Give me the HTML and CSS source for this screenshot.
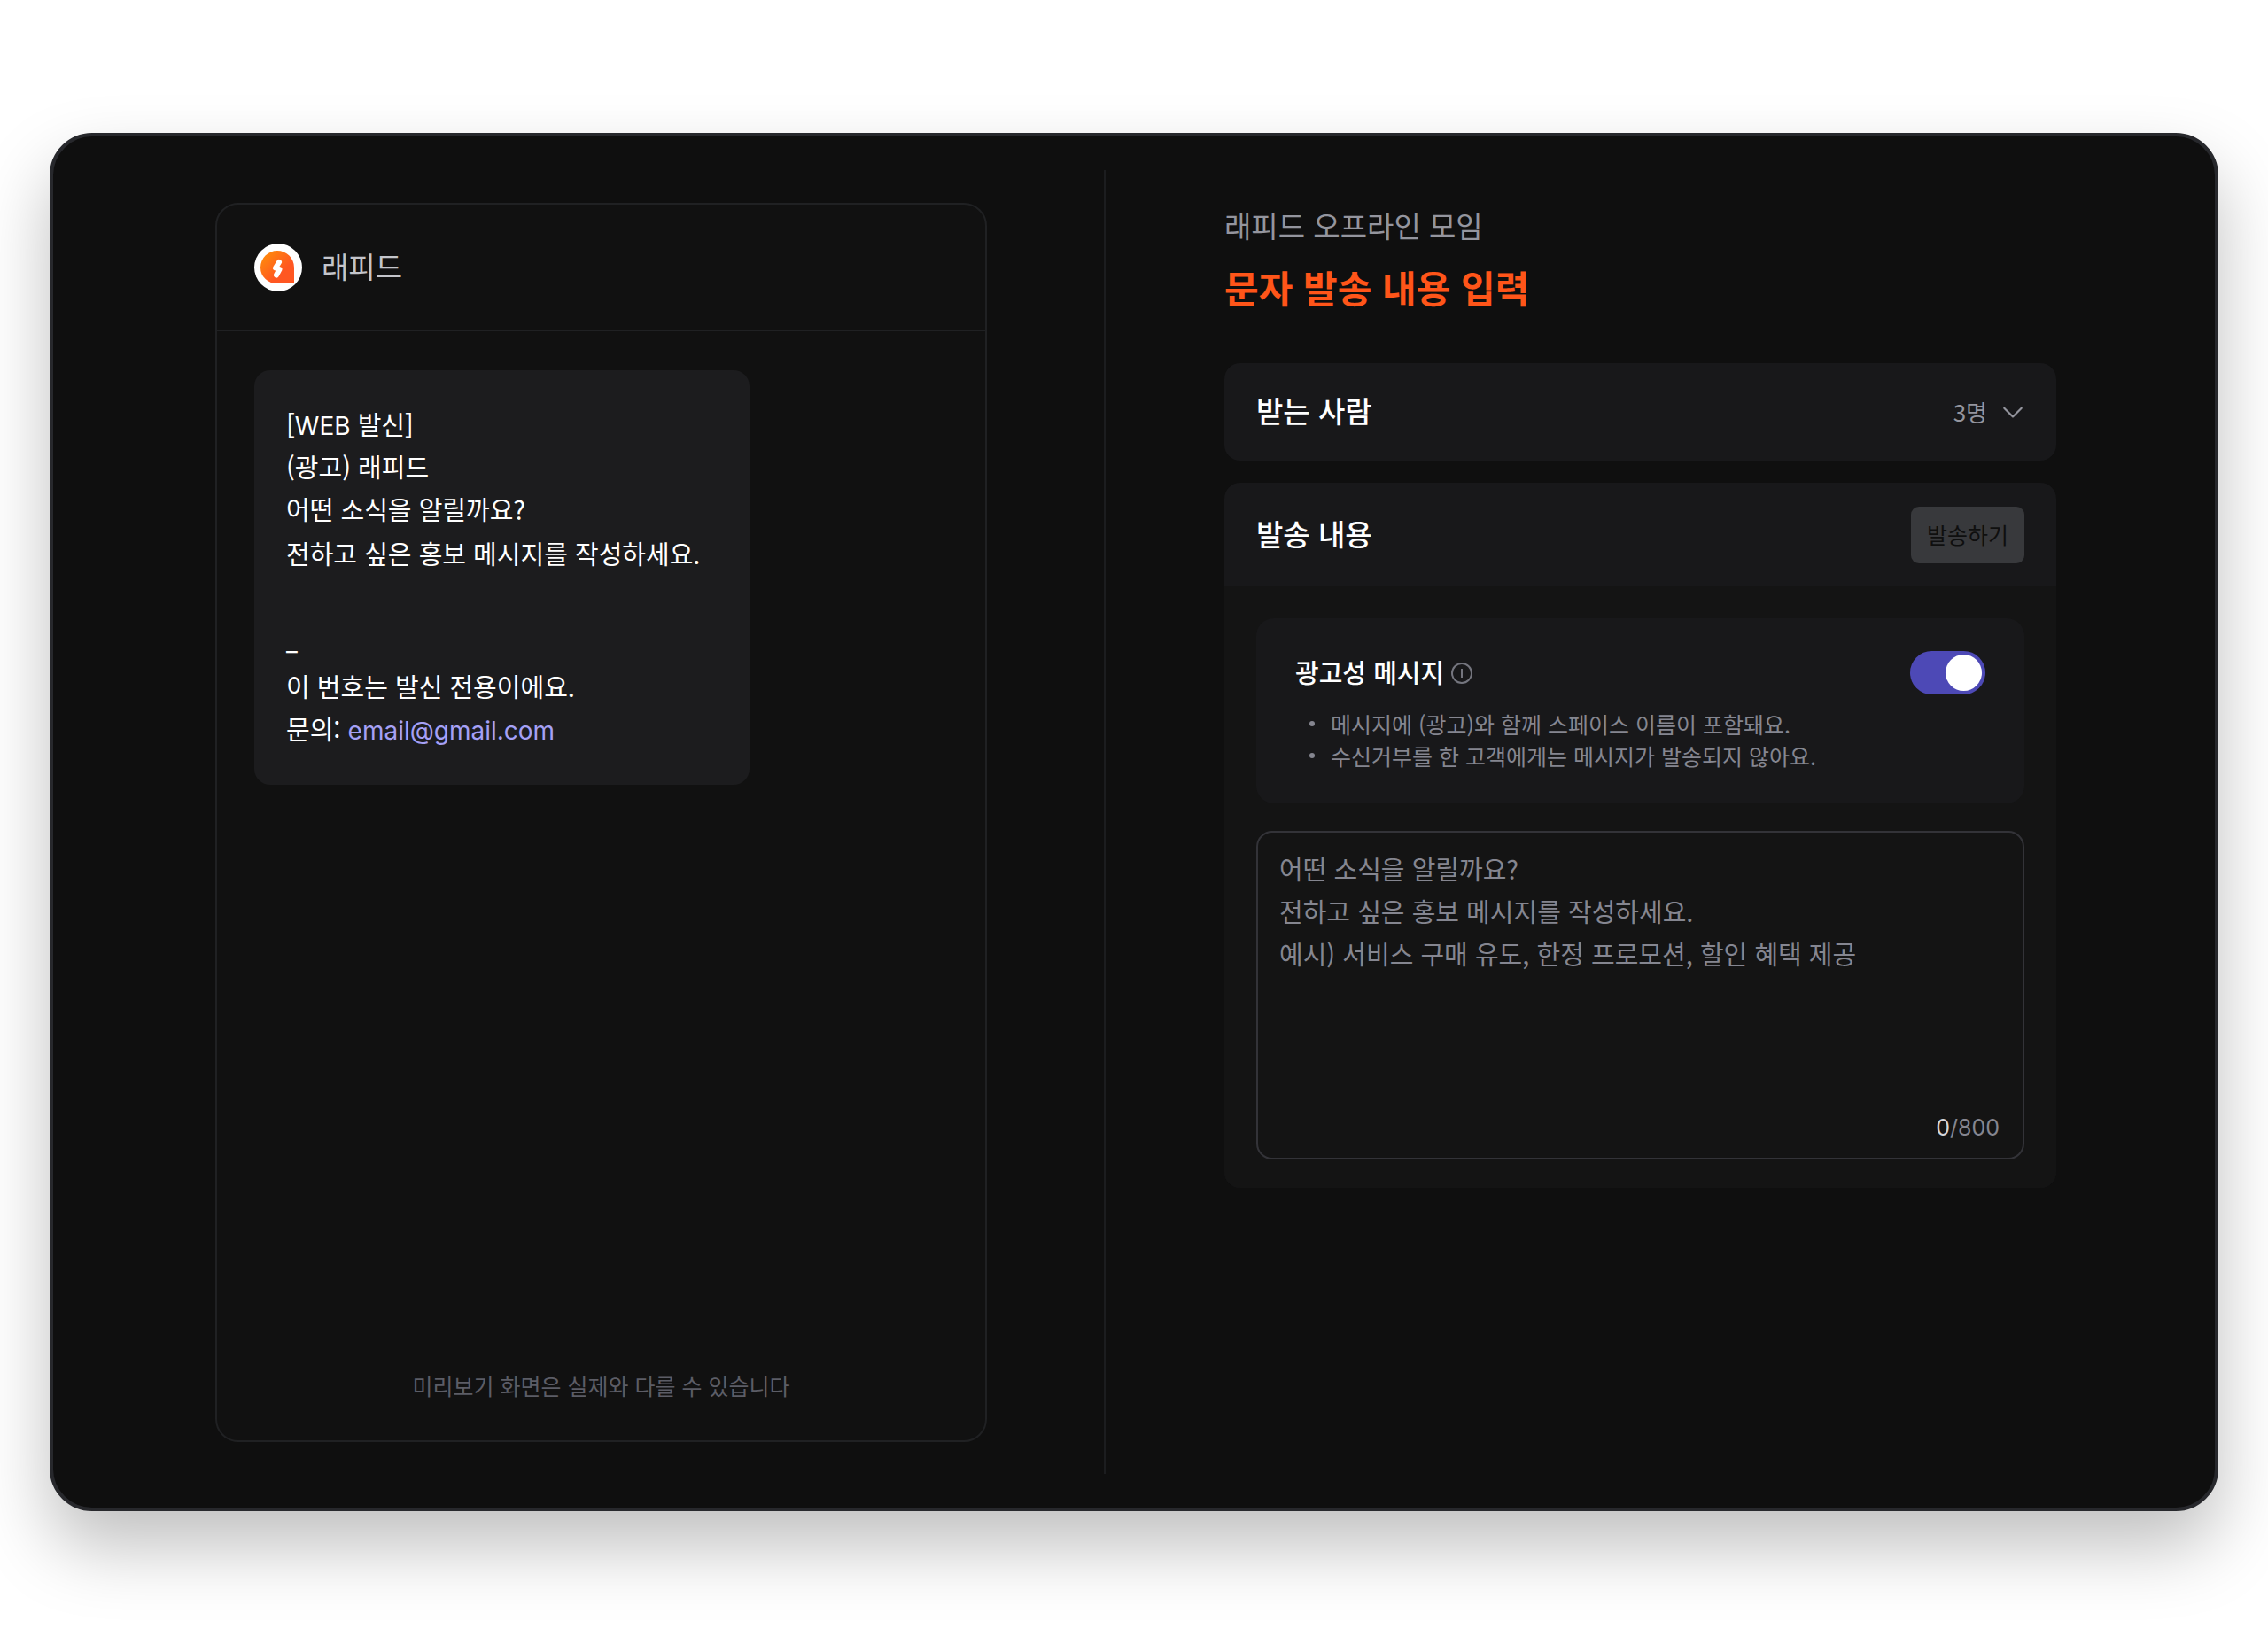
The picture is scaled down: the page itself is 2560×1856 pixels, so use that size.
FILE: index.html
```html
<!DOCTYPE html>
<html lang="ko">

<head>
    <meta charset="UTF-8">
    <meta name="viewport" content="width=device-width, initial-scale=1.0">
    <title>문자 발송 내용 입력</title>
    <link rel="stylesheet" href="styles.css">
</head>

<body>
    <main class="window">
        <!-- Preview -->
        <section class="preview-column">
            <div class="preview">
                <header class="preview-header">
                    <svg class="logo" viewBox="0 0 54 54" aria-hidden="true">
                        <defs>
                            <linearGradient id="logo-fill" x1="0" y1="0" x2="1" y2="1">
                                <stop offset="0.1" stop-color="#ff8a0c" />
                                <stop offset="0.65" stop-color="#ff5722" />
                            </linearGradient>
                        </defs>
                        <circle cx="27" cy="27" r="27" fill="#fff" />
                        <path d="M26 8a19 19 0 0 1 19 19v17a1 1 0 0 1-1 1H26a18 18 0 0 1-19-18A19 19 0 0 1 26 8z" fill="url(#logo-fill)" />
                        <path d="M28 21l-4 6.500 4.500 1.500-3.500 6.500" fill="none" stroke="#fff" stroke-width="6" stroke-linecap="round" stroke-linejoin="round" />
                    </svg>
                    <span>래피드</span>
                </header>
                <div class="preview-body">
                    <div class="bubble">
                        <p>[<span class="latin">WEB</span> 발신]<br>(광고) 래피드<br>어떤 소식을 알릴까요?</p>
                        <p class="bubble-message">전하고 싶은 홍보 메시지를 작성하세요.</p>
                        <p class="bubble-mark"><span class="latin">_</span></p>
                        <p>이 번호는 발신 전용이에요.<br>문의: <a class="latin" href="mailto:email@gmail.com">email@gmail.com</a></p>
                    </div>
                    <p class="preview-note">미리보기 화면은 실제와 다를 수 있습니다</p>
                </div>
            </div>
        </section>

        <!-- Form -->
        <section class="form-column">
            <p class="subtitle">래피드 오프라인 모임</p>
            <h1>문자 발송 내용 입력</h1>

            <div class="card recipients">
                <h2>받는 사람</h2>
                <button class="recipients-toggle" type="button" aria-expanded="false">
                    <span>3명</span>
                    <svg class="chevron" viewBox="0 0 24 24" aria-hidden="true">
                        <path d="M3 8l9 9 9-9" />
                    </svg>
                </button>
            </div>

            <form class="card">
                <div class="card-header">
                    <h2>발송 내용</h2>
                    <button class="send-button" type="submit" disabled>발송하기</button>
                </div>
                <div class="card-body">
                    <div class="notice">
                        <div class="notice-title">
                            <label for="ad-message">광고성 메시지</label>
                            <svg class="info" viewBox="0 0 24 24" aria-hidden="true">
                                <circle cx="12" cy="12" r="11" />
                                <path d="M12 10v7M12 7v2" />
                            </svg>
                            <input class="switch" type="checkbox" role="switch" id="ad-message" checked>
                        </div>
                        <ul>
                            <li>메시지에 (광고)와 함께 스페이스 이름이 포함돼요.</li>
                            <li>수신거부를 한 고객에게는 메시지가 발송되지 않아요.</li>
                        </ul>
                    </div>
                    <div class="message-box">
                        <textarea id="message" aria-label="발송 내용" maxlength="800" placeholder="어떤 소식을 알릴까요?&#10;전하고 싶은 홍보 메시지를 작성하세요.&#10;예시) 서비스 구매 유도, 한정 프로모션, 할인 혜택 제공"></textarea>
                        <div class="counter"><span id="count">0</span>/800</div>
                    </div>
                </div>
            </form>
        </section>
    </main>

    <script>
        const message = document.getElementById('message');

        message.addEventListener('input', () => {
            document.getElementById('count').textContent = message.value.length;
            document.querySelector('.send-button').disabled = message.value.length === 0;
        });
    </script>
</body>

</html>
```
FILE: styles.css
```css
* {
    box-sizing: border-box;
}

body {
    margin: 0;
    min-height: 100vh;
    padding: 150px 56px;
    display: flex;
    background: #fff;
    color: #fff;
    font-family: "Noto Sans CJK KR", sans-serif;
    font-size: 29px;
    line-height: 48px;
}

h1,
h2,
p,
ul {
    margin: 0;
    padding: 0;
}

button,
textarea {
    font-family: inherit;
    border: none;
}

/* Inter sits higher than Noto, so keep it from stretching the line */
.latin {
    font-family: Inter, sans-serif;
    font-size: 28px;
    line-height: 0;
}

.window {
    flex: 1;
    display: grid;
    grid-template-columns: 1136fr 1208fr;
    padding: 38px 46px 38px 50px;
    background: #0f0f0f;
    border: 4px solid #27282c;
    border-radius: 48px;
    box-shadow: 0 40px 80px rgba(0, 0, 0, 0.25);
}

/* Preview */
.preview-column {
    display: flex;
    padding: 37px 132px 36px 133px;
}

.preview {
    flex: 1;
    display: flex;
    flex-direction: column;
    background: #111;
    border: 2px solid #202123;
    border-radius: 26px;
}

.preview-header {
    display: flex;
    align-items: center;
    gap: 22px;
    height: 143px;
    padding: 0 42px;
    border-bottom: 2px solid #202123;
    color: #c4c5cb;
    font-size: 33px;
}

.preview-header span {
    padding-bottom: 4px;
}

.logo {
    width: 54px;
    height: 54px;
}

.preview-body {
    flex: 1;
    display: flex;
    flex-direction: column;
    justify-content: space-between;
    padding: 44px 42px 38px;
}

.bubble {
    align-self: flex-start;
    min-width: 559px;
    padding: 36px 36px 40px;
    background: #1c1c1e;
    border-radius: 18px;
}

.bubble-message {
    margin-bottom: 48px;
    line-height: 52px;
}

.bubble-mark {
    margin-bottom: 4px;
}

.bubble a {
    color: #a5a0f5;
    text-decoration: none;
}

.preview-note {
    color: #5c5d66;
    font-size: 25px;
    text-align: center;
}

/* Form */
.form-column {
    padding: 38px 133px 38px 134px;
    border-left: 2px solid #1c1d1f;
}

.subtitle {
    color: #94959e;
    font-size: 33px;
}

h1 {
    margin: 18px 0 58px;
    color: #ff5519;
    font-size: 42px;
    font-weight: 700;
    line-height: 56px;
}

h2 {
    padding-bottom: 4px;
    font-size: 33px;
    font-weight: 500;
}

.card {
    margin-bottom: 25px;
    background: #18181a;
    border-radius: 18px;
}

.recipients {
    display: flex;
    align-items: center;
    justify-content: space-between;
    height: 110px;
    padding: 0 36px;
}

.recipients-toggle {
    display: flex;
    align-items: center;
    gap: 16px;
    padding: 0;
    background: none;
    color: #94959e;
    font-size: 26px;
    cursor: pointer;
}

.recipients-toggle span {
    padding-bottom: 2px;
}

.chevron {
    width: 26px;
    height: 26px;
    fill: none;
    stroke: #94959e;
    stroke-width: 2;
    stroke-linecap: round;
    stroke-linejoin: round;
}

.card-header {
    display: flex;
    align-items: center;
    justify-content: space-between;
    height: 117px;
    padding: 0 36px;
}

.send-button {
    width: 128px;
    height: 64px;
    padding: 0 0 2px;
    background: #38393c;
    border-radius: 9px;
    color: #0f0f0f;
    font-size: 25px;
}

.card-body {
    padding: 36px 36px 32px;
    background: #141414;
    border-radius: 0 0 18px 18px;
}

.notice {
    margin-bottom: 31px;
    padding: 37px 44px 36px;
    background: #18181a;
    border-radius: 20px;
}

.notice-title {
    display: flex;
    align-items: center;
    gap: 8px;
    height: 49px;
    margin-bottom: 15px;
    font-weight: 500;
}

.notice-title label {
    padding-bottom: 4px;
}

.info {
    width: 24px;
    height: 24px;
    fill: none;
    stroke: #74757e;
    stroke-width: 2;
}

.switch {
    appearance: none;
    display: flex;
    width: 85px;
    height: 49px;
    margin: 0 0 0 auto;
    padding: 4px;
    background: #38393c;
    border-radius: 25px;
    cursor: pointer;
}

.switch::before {
    content: "";
    width: 41px;
    height: 41px;
    background: #fff;
    border-radius: 50%;
}

.switch:checked {
    justify-content: flex-end;
    background: #4d49b6;
}

.notice ul {
    padding-left: 16px;
    color: #858690;
    font-size: 25px;
    line-height: 36px;
    list-style: none;
}

.notice li {
    display: flex;
    align-items: center;
    gap: 18px;
}

.notice li::before {
    content: "";
    width: 6px;
    height: 6px;
    background: #858690;
    border-radius: 50%;
}

.message-box {
    padding: 16px 26px 10px 24px;
    border: 2px solid #333338;
    border-radius: 18px;
}

textarea {
    display: block;
    width: 100%;
    height: 293px;
    padding: 0;
    background: none;
    color: #fff;
    font-size: 29px;
    line-height: 48px;
    outline: none;
    resize: none;
}

textarea::placeholder {
    color: #858690;
}

.counter {
    color: #858690;
    font-family: Inter, sans-serif;
    font-size: 25px;
    text-align: right;
}

.counter span {
    color: #d5d6da;
}
```
